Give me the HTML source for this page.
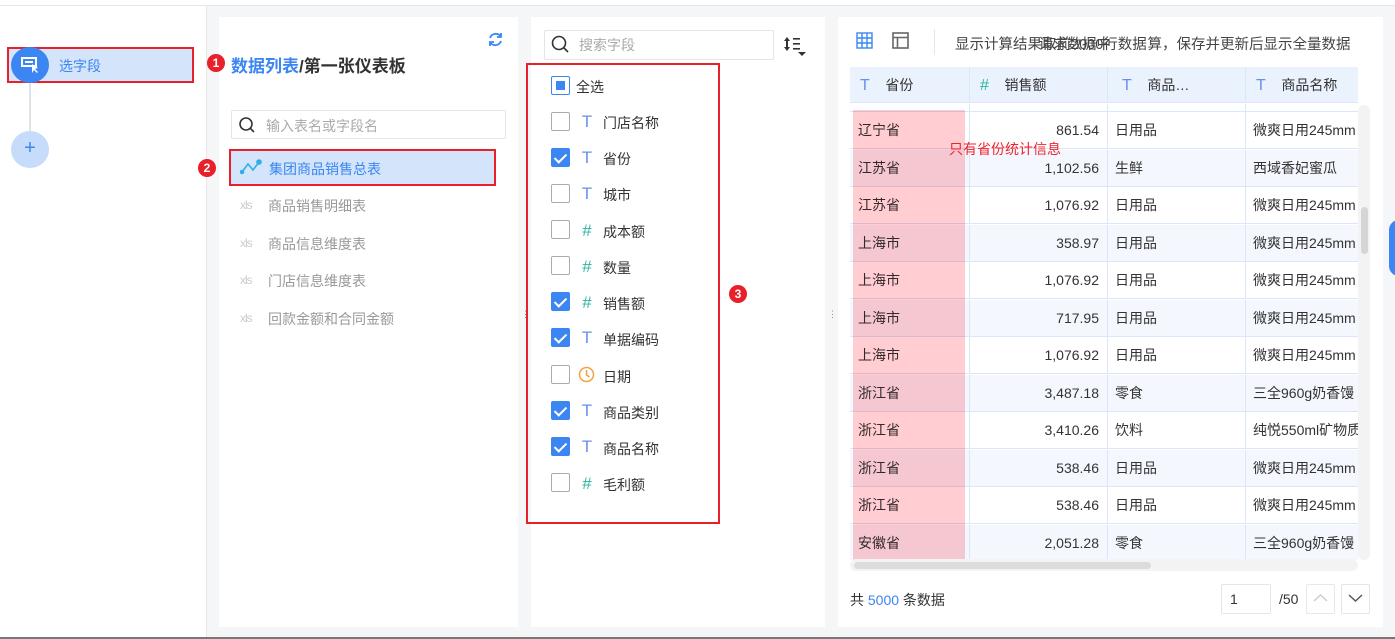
<!DOCTYPE html>
<html><head><meta charset="utf-8"><style>
*{box-sizing:border-box;margin:0;padding:0}
body{width:1395px;height:639px;position:relative;overflow:hidden;background:#fff;font-family:"Liberation Sans","Noto Sans CJK SC",sans-serif;font-size:14px;color:#333}
.a{position:absolute}
.badge{position:absolute;width:18px;height:18px;border-radius:50%;background:#e8202a;color:#fff;font-size:12px;text-align:center;line-height:18px;font-weight:bold}
.cb{position:absolute;left:551px;width:19px;height:19px;border:1px solid #a7abb3;border-radius:2px;background:#fff}
.cb.on{background:#3b86f2;border-color:#3b86f2}
.cb.on:after{content:"";position:absolute;left:5px;top:2px;width:5px;height:10px;border:solid #fff;border-width:0 2px 2px 0;transform:rotate(45deg)}
.ic{position:absolute;left:580px;width:14px;text-align:center;font-size:17px;line-height:20px}
.lb{position:absolute;left:603px;font-size:14px;color:#333}
.T{color:#6a8ef0}.H{color:#2bb5a0}
.xl{position:absolute;left:240px;font-size:12px;color:#ccc;letter-spacing:-1px}
.tl{position:absolute;left:268px;font-size:14px;color:#999}
.row{position:absolute;left:850px;width:508px;height:37px;border-bottom:1px solid #dbe7f8}
.row div{position:absolute;top:0;height:37px;line-height:37px;border-right:1px solid #dbe7f8;white-space:nowrap;overflow:hidden}
.c1{left:0;width:120px;padding-left:8px}.c2{left:120px;width:138px;text-align:right;padding-right:8px}.c3{left:258px;width:138px;padding-left:7px}.c4{left:396px;width:112px;padding-left:7px;border-right:none!important}
</style></head><body>
<div class="a" style="left:0;top:5px;width:1395px;height:1px;background:#e5e6e8"></div>
<div class="a" style="left:207px;top:6px;width:1188px;height:631px;background:#f5f6f8"></div>
<div class="a" style="left:206px;top:6px;width:1px;height:631px;background:#e8e8e8"></div>
<div class="a" style="left:0;top:637px;width:1395px;height:2px;background:#777"></div>
<!-- left sidebar -->
<div class="a" style="left:29px;top:80px;width:2px;height:52px;background:#dfe2e6"></div>
<div class="a" style="left:7px;top:47px;width:187px;height:36px;background:#d4e4fb;border:2px solid #e8202a"></div>
<div class="a" style="left:11px;top:47px;width:38px;height:36px;border-radius:50%;background:#3b86f2"></div>
<svg class="a" style="left:21px;top:56px" width="20" height="18"><rect x="1" y="2" width="14" height="8" fill="none" stroke="#fff" stroke-width="2"/><rect x="4" y="5" width="8" height="2" fill="#fff"/><path d="M11 8 L11 17 L13 14 L16 17 L17 16 L14 13 L17 12 Z" fill="#fff"/></svg>
<div class="a" style="left:59px;top:56px;color:#3b86f2;font-size:14px">选字段</div>
<div class="a" style="left:11px;top:131px;width:38px;height:37px;border-radius:50%;background:#c7dbfa;color:#3b86f2;text-align:center;line-height:35px;font-size:20px">+</div>
<!-- panel 1 -->
<div class="a" style="left:219px;top:17px;width:299px;height:610px;background:#fff"></div>
<svg class="a" style="left:487px;top:31px" width="17" height="17" fill="none" stroke="#3b86f2" stroke-width="1.8"><path d="M3 7 A6 6 0 0 1 14 6"/><path d="M14 10 A6 6 0 0 1 3 11"/><path d="M14 2 L14 6 L10 6"/><path d="M3 15 L3 11 L7 11"/></svg>
<div class="badge" style="left:207px;top:54px">1</div>
<div class="a" style="left:231px;top:52px;font-size:17px;font-weight:bold;color:#333"><span style="color:#3b86f2">数据列表</span>/第一张仪表板</div>
<div class="a" style="left:231px;top:110px;width:275px;height:29px;border:1px solid #e3e5e8;border-radius:2px"></div>
<svg class="a" style="left:238px;top:116px" width="18" height="18" fill="none" stroke="#333" stroke-width="1.6"><circle cx="8" cy="8" r="6"/><path d="M12.5 12.5 L16 16"/></svg>
<div class="a" style="left:266px;top:116px;color:#aaa;font-size:14px">输入表名或字段名</div>
<div class="badge" style="left:198px;top:159px">2</div>
<div class="a" style="left:229px;top:149px;width:267px;height:37px;background:#d4e4fb;border:2px solid #e8202a"></div>
<svg class="a" style="left:240px;top:159px" width="22" height="16" fill="none" stroke="#2bb0e8" stroke-width="1.6"><path d="M2 13 L8 5 L13 11 L19 3"/><circle cx="2" cy="13" r="1.5" fill="#2bb0e8"/><circle cx="19" cy="3" r="2" fill="#2bb0e8"/></svg>
<div class="a" style="left:269px;top:159px;color:#3b86f2;font-size:14px">集团商品销售总表</div>
<div class="xl" style="top:198px">xls</div><div class="tl" style="top:196px">商品销售明细表</div>
<div class="xl" style="top:236px">xls</div><div class="tl" style="top:234px">商品信息维度表</div>
<div class="xl" style="top:273px">xls</div><div class="tl" style="top:271px">门店信息维度表</div>
<div class="xl" style="top:311px">xls</div><div class="tl" style="top:309px">回款金额和合同金额</div>
<!-- panel 2 -->
<div class="a" style="left:531px;top:17px;width:294px;height:610px;background:#fff"></div>
<div class="a" style="left:544px;top:30px;width:230px;height:30px;border:1px solid #e3e5e8;border-radius:2px"></div>
<svg class="a" style="left:551px;top:35px" width="19" height="19" fill="none" stroke="#333" stroke-width="1.6"><circle cx="8" cy="8" r="6.5"/><path d="M13 13 L17 17"/></svg>
<div class="a" style="left:579px;top:35px;color:#aaa">搜索字段</div>
<svg class="a" style="left:783px;top:36px" width="26" height="22" fill="#333"><path d="M4 1 L1 5 H7 Z M4 15 L1 11 H7 Z" /><rect x="3" y="4" width="2" height="8"/><rect x="10" y="2" width="7" height="1.6"/><rect x="10" y="7" width="7" height="1.6"/><rect x="10" y="12" width="7" height="1.6"/><path d="M15 16 H23 L19 20 Z"/></svg>
<div class="a" style="left:526px;top:63px;width:194px;height:461px;border:2px solid #e8202a"></div>
<div class="cb" style="top:76px;border-color:#3b86f2"><div style="position:absolute;left:4px;top:4px;width:9px;height:9px;background:#3b86f2"></div></div><div class="lb" style="left:576px;top:77px">全选</div>
<div class="cb" style="top:112px"></div><div class="ic T" style="top:112px">T</div><div class="lb" style="top:113px">门店名称</div>
<div class="cb on" style="top:148px"></div><div class="ic T" style="top:148px">T</div><div class="lb" style="top:149px">省份</div>
<div class="cb" style="top:184px"></div><div class="ic T" style="top:184px">T</div><div class="lb" style="top:185px">城市</div>
<div class="cb" style="top:220px"></div><div class="ic H" style="top:221px">#</div><div class="lb" style="top:222px">成本额</div>
<div class="cb" style="top:256px"></div><div class="ic H" style="top:257px">#</div><div class="lb" style="top:258px">数量</div>
<div class="cb on" style="top:292px"></div><div class="ic H" style="top:293px">#</div><div class="lb" style="top:294px">销售额</div>
<div class="cb on" style="top:328px"></div><div class="ic T" style="top:328px">T</div><div class="lb" style="top:330px">单据编码</div>
<div class="cb" style="top:365px"></div><svg class="a" style="left:578px;top:366px" width="17" height="17" fill="none" stroke="#f5a142" stroke-width="1.5"><circle cx="8.5" cy="8.5" r="7"/><path d="M8.5 4 V9 L11.5 11"/></svg><div class="lb" style="top:367px">日期</div>
<div class="cb on" style="top:401px"></div><div class="ic T" style="top:401px">T</div><div class="lb" style="top:403px">商品类别</div>
<div class="cb on" style="top:437px"></div><div class="ic T" style="top:437px">T</div><div class="lb" style="top:439px">商品名称</div>
<div class="cb" style="top:473px"></div><div class="ic H" style="top:474px">#</div><div class="lb" style="top:475px">毛利额</div>
<div class="badge" style="left:729px;top:285px">3</div>
<div class="a" style="left:521px;top:312px;color:#888;font-size:9px;line-height:4px">⋮</div>
<div class="a" style="left:828px;top:312px;color:#888;font-size:9px;line-height:4px">⋮⋮</div>
<!-- panel 3 -->
<div class="a" style="left:838px;top:17px;width:545px;height:610px;background:#fff"></div>
<svg class="a" style="left:856px;top:32px" width="18" height="18" fill="none" stroke="#3b86f2" stroke-width="1.4"><rect x="1" y="1" width="15" height="15"/><path d="M6 1 V16 M11 1 V16 M1 6 H16 M1 11 H16"/></svg>
<svg class="a" style="left:892px;top:32px" width="18" height="18" fill="none" stroke="#666" stroke-width="1.6"><rect x="1" y="1" width="15" height="15"/><path d="M1 5.5 H16 M5.5 5.5 V16"/></svg>
<div class="a" style="left:934px;top:29px;width:1px;height:26px;background:#e8e8e8"></div>
<div class="a" style="left:955px;top:33px;font-size:14.5px;color:#444;white-space:nowrap">显示计<span style="display:inline-block;width:149px;position:relative;vertical-align:top;height:18px"><span style="position:absolute;left:0;top:0">算结果取前2000行数据</span><span style="position:absolute;left:40px;top:0">请求数据中</span></span>算，保存并更新后显示全量数据</div>
<div class="a" style="left:850px;top:67px;width:508px;height:36px;background:#eaf2fd;border-bottom:1px solid #dbe7f8"></div>
<div class="a" style="left:850px;top:67px;width:120px;height:36px;line-height:36px;border-right:1px solid #dbe7f8;padding-left:10px"><span class="T" style="font-size:16px">T</span>&nbsp;&nbsp;&nbsp;&nbsp;省份</div>
<div class="a" style="left:970px;top:67px;width:138px;height:36px;line-height:36px;border-right:1px solid #dbe7f8;padding-left:10px"><span class="H" style="font-size:16px">#</span>&nbsp;&nbsp;&nbsp;&nbsp;销售额</div>
<div class="a" style="left:1108px;top:67px;width:138px;height:36px;line-height:36px;border-right:1px solid #dbe7f8;padding-left:14px"><span class="T" style="font-size:16px">T</span>&nbsp;&nbsp;&nbsp;&nbsp;商品…</div>
<div class="a" style="left:1246px;top:67px;width:112px;height:36px;line-height:36px;padding-left:10px;white-space:nowrap"><span class="T" style="font-size:16px">T</span>&nbsp;&nbsp;&nbsp;&nbsp;商品名称</div>
<div class="row" style="top:104px;height:8px;border-bottom:1px solid #dbe7f8"><div class="c1" style="height:8px"></div><div class="c2" style="height:8px"></div><div class="c3" style="height:8px"></div></div>
<div class="row" style="top:112px;background:#fff"><div class="c1">辽宁省</div><div class="c2">861.54</div><div class="c3">日用品</div><div class="c4">微爽日用245mm</div></div>
<div class="row" style="top:149.5px;background:#f4f8fe"><div class="c1">江苏省</div><div class="c2">1,102.56</div><div class="c3">生鲜</div><div class="c4">西域香妃蜜瓜</div></div>
<div class="row" style="top:187px;background:#fff"><div class="c1">江苏省</div><div class="c2">1,076.92</div><div class="c3">日用品</div><div class="c4">微爽日用245mm</div></div>
<div class="row" style="top:224.5px;background:#f4f8fe"><div class="c1">上海市</div><div class="c2">358.97</div><div class="c3">日用品</div><div class="c4">微爽日用245mm</div></div>
<div class="row" style="top:262px;background:#fff"><div class="c1">上海市</div><div class="c2">1,076.92</div><div class="c3">日用品</div><div class="c4">微爽日用245mm</div></div>
<div class="row" style="top:299.5px;background:#f4f8fe"><div class="c1">上海市</div><div class="c2">717.95</div><div class="c3">日用品</div><div class="c4">微爽日用245mm</div></div>
<div class="row" style="top:337px;background:#fff"><div class="c1">上海市</div><div class="c2">1,076.92</div><div class="c3">日用品</div><div class="c4">微爽日用245mm</div></div>
<div class="row" style="top:374.5px;background:#f4f8fe"><div class="c1">浙江省</div><div class="c2">3,487.18</div><div class="c3">零食</div><div class="c4">三全960g奶香馒</div></div>
<div class="row" style="top:412px;background:#fff"><div class="c1">浙江省</div><div class="c2">3,410.26</div><div class="c3">饮料</div><div class="c4">纯悦550ml矿物质</div></div>
<div class="row" style="top:449.5px;background:#f4f8fe"><div class="c1">浙江省</div><div class="c2">538.46</div><div class="c3">日用品</div><div class="c4">微爽日用245mm</div></div>
<div class="row" style="top:487px;background:#fff"><div class="c1">浙江省</div><div class="c2">538.46</div><div class="c3">日用品</div><div class="c4">微爽日用245mm</div></div>
<div class="row" style="top:524.5px;background:#f4f8fe;height:35px;border-bottom:none"><div class="c1">安徽省</div><div class="c2">2,051.28</div><div class="c3">零食</div><div class="c4">三全960g奶香馒</div></div>
<div class="a" style="left:853px;top:110px;width:112px;height:455px;background:#ffcdd2;mix-blend-mode:multiply"></div>
<div class="a" style="left:949px;top:139px;color:#f0222c;font-size:14px">只有省份统计信息</div>
<div class="a" style="left:850px;top:559px;width:508px;height:12px;background:#f3f3f3;border-radius:6px"></div>
<div class="a" style="left:854px;top:562px;width:297px;height:7px;background:#dcdcdf;border-radius:4px"></div>
<div class="a" style="left:1358px;top:105px;width:12px;height:455px;background:#f3f3f3;border-radius:6px"></div>
<div class="a" style="left:1361px;top:207px;width:7px;height:47px;background:#d5d5d8;border-radius:4px"></div>
<div class="a" style="left:850px;top:590px;font-size:14px">共 <span style="color:#3b86f2">5000</span> 条数据</div>
<div class="a" style="left:1221px;top:584px;width:50px;height:30px;border:1px solid #e3e5e8;border-radius:2px;padding:6px 0 0 8px">1</div>
<div class="a" style="left:1279px;top:591px">/50</div>
<div class="a" style="left:1306px;top:584px;width:29px;height:30px;border:1px solid #e8e8e8;border-radius:2px"></div>
<svg class="a" style="left:1312px;top:592px" width="17" height="12" fill="none" stroke="#ccc" stroke-width="1.4"><path d="M2 9 L8.5 3 L15 9"/></svg>
<div class="a" style="left:1341px;top:584px;width:29px;height:30px;border:1px solid #e3e5e8;border-radius:2px"></div>
<svg class="a" style="left:1347px;top:592px" width="17" height="12" fill="none" stroke="#555" stroke-width="1.4"><path d="M2 3 L8.5 9 L15 3"/></svg>
<div class="a" style="left:1389px;top:220px;width:20px;height:56px;border-radius:10px;background:#3b86f2"></div>
</body></html>
